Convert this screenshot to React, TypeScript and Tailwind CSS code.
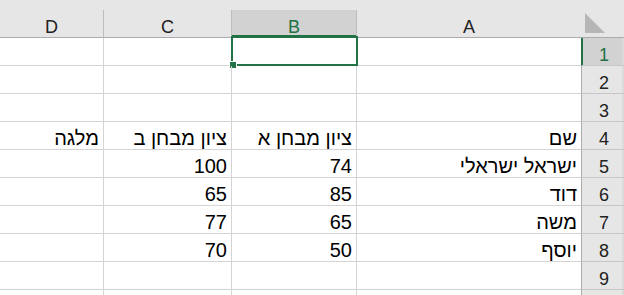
import React from 'react';

type Row = { a?: string; b?: string; c?: string; d?: string };

const rows: Row[] = [
  {},
  {},
  {},
  { a: 'שם', b: 'ציון מבחן א', c: 'ציון מבחן ב', d: 'מלגה' },
  { a: 'ישראל ישראלי', b: '74', c: '100' },
  { a: 'דוד', b: '85', c: '65' },
  { a: 'משה', b: '65', c: '77' },
  { a: 'יוסף', b: '50', c: '70' },
  {},
  {},
];

const cols = 'grid grid-cols-[43px_225px_125px_128px_1fr]';
const cell =
  'flex items-end justify-start px-[4px] pb-px border-b border-[#d4d4d4] whitespace-nowrap text-[20px] leading-[20px] text-black';

const App: React.FC = () => {
  return (
    <div
      dir="rtl"
      className="w-[624px] h-[295px] overflow-hidden bg-white font-['Liberation_Sans',Arial,sans-serif] select-none"
    >
      {/* band above the column letters */}
      <div className="h-[10px] bg-[#e6e6e6]" />

      {/* column headers */}
      <div className={`${cols} h-[28px] bg-[#e6e6e6] text-[18px] leading-[18px] text-[#222]`}>
        <div className="relative border-b border-[#ababab]">
          <svg width="20" height="20" className="absolute right-[19px] bottom-[4px]">
            <polygon points="0,0 0,20 20,20" fill="#b6b6b6" />
          </svg>
        </div>
        <div className="flex items-end justify-center pb-px border-l border-b border-l-[#bdbdbd] border-b-[#ababab]">A</div>
        <div className="flex items-end justify-center pb-px border-l border-b border-l-[#bdbdbd] border-b-[#217346] bg-[#d2d2d2] text-[#217346] shadow-[inset_0_-2px_0_#217346]">
          B
        </div>
        <div className="flex items-end justify-center pb-px border-l border-b border-l-[#bdbdbd] border-b-[#ababab]">C</div>
        <div className="flex items-end justify-center pb-px border-b border-[#ababab]">D</div>
      </div>

      {/* rows */}
      {rows.map((r, i) => {
        const first = i === 0;
        // the 10th row only peeks in at the bottom, its number is below the fold
        const label = i < 9 ? String(i + 1) : '';
        return (
          <div key={i} className={`${cols} h-[28px]`}>
            <div
              className={`flex items-end justify-center pb-px pl-[2px] border-l border-b border-b-[#c6c6c6] text-[18px] leading-[18px] ${
                first
                  ? 'bg-[#d2d2d2] text-[#217346] border-l-[#217346] shadow-[inset_1px_0_0_#217346,inset_-2px_0_0_#dadada]'
                  : 'bg-[#e6e6e6] text-[#222] border-l-[#ababab] shadow-[inset_-2px_0_0_#dadada]'
              }`}
            >
              {label}
            </div>
            <div className={`${cell} border-l`}>{r.a}</div>
            <div className={`${cell} border-l relative`}>
              {r.b}
              {first && (
                <>
                  <div className="absolute left-[-1px] top-[-2px] w-[127px] h-[30px] border-2 border-[#217346]" />
                  <div className="absolute left-[-3px] top-[23px] w-[8px] h-[8px] bg-[#217346] border border-white" />
                </>
              )}
            </div>
            <div className={`${cell} border-l`}>{r.c}</div>
            <div className={`${cell} justify-center`}>{r.d}</div>
          </div>
        );
      })}
    </div>
  );
};

export default App;
